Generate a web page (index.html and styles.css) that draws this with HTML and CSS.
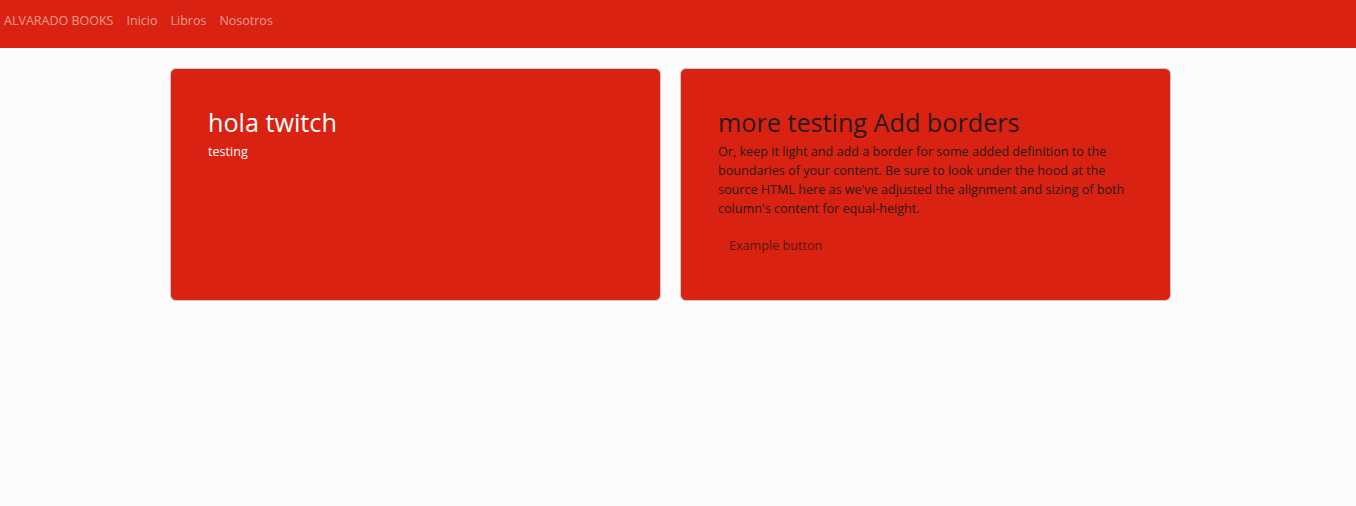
FILE: index.html
```html
<!DOCTYPE html>
<html lang="es">
<head>
<meta charset="utf-8">
<title>Alvarado Books</title>
<link rel="stylesheet" href="styles.css">
</head>
<body>
<nav class="navbar">
  <a class="brand" href="#">ALVARADO BOOKS</a>
  <a class="nav-link" href="#">Inicio</a>
  <a class="nav-link" href="#">Libros</a>
  <a class="nav-link" href="#">Nosotros</a>
</nav>
<main class="main">
  <div class="row">
    <div class="card card-light">
      <h2 class="card-title">hola twitch</h2>
      <p class="card-text">testing</p>
    </div>
    <div class="card card-dark">
      <h2 class="card-title">more testing Add borders</h2>
      <p class="card-text">Or, keep it light and add a border for some added definition to the boundaries of your content. Be sure to look under the hood at the source HTML here as we've adjusted the alignment and sizing of both column's content for equal-height.</p>
      <button class="btn" type="button">Example button</button>
    </div>
  </div>
</main>
</body>
</html>
```
FILE: styles.css
```css
* { box-sizing: border-box; }
html, body { margin: 0; padding: 0; }
body {
  background: #fcfcfc;
  font-family: "Open Sans", "Liberation Sans", sans-serif;
  font-size: 12.5px;
  line-height: 1.5;
  color: #212529;
}
.navbar {
  height: 48px;
  background: #d92211;
  display: flex;
  align-items: center;
  gap: 13px;
  padding: 0 4px 6px;
}
.navbar a {
  color: rgba(255, 255, 255, 0.55);
  text-decoration: none;
  font-size: 12.5px;
}
.main {
  display: flex;
  justify-content: center;
  padding: 20px 15px 0 0;
}
.row {
  display: flex;
  gap: 19px;
  width: 1001px;
}
.card {
  width: 491px;
  height: 233px;
  background: #d92211;
  border: 1px solid #c9c9c9;
  border-radius: 6px;
  padding: 38px 37px;
}
.card-light { color: #ffffff; }
.card-dark { color: #2b1a18; }
.card-title {
  margin: 0;
  font-weight: 400;
  font-size: 25.2px;
  line-height: 1.25;
}
.card-text {
  margin: 3px 0 0;
  font-size: 12.6px;
  line-height: 19px;
}
.btn {
  margin-top: 11px;
  background: transparent;
  border: 1px solid transparent;
  font-family: inherit;
  font-size: 12.6px;
  line-height: 19px;
  color: #5a1810;
  padding: 6px 10px;
  border-radius: 4px;
}
```
